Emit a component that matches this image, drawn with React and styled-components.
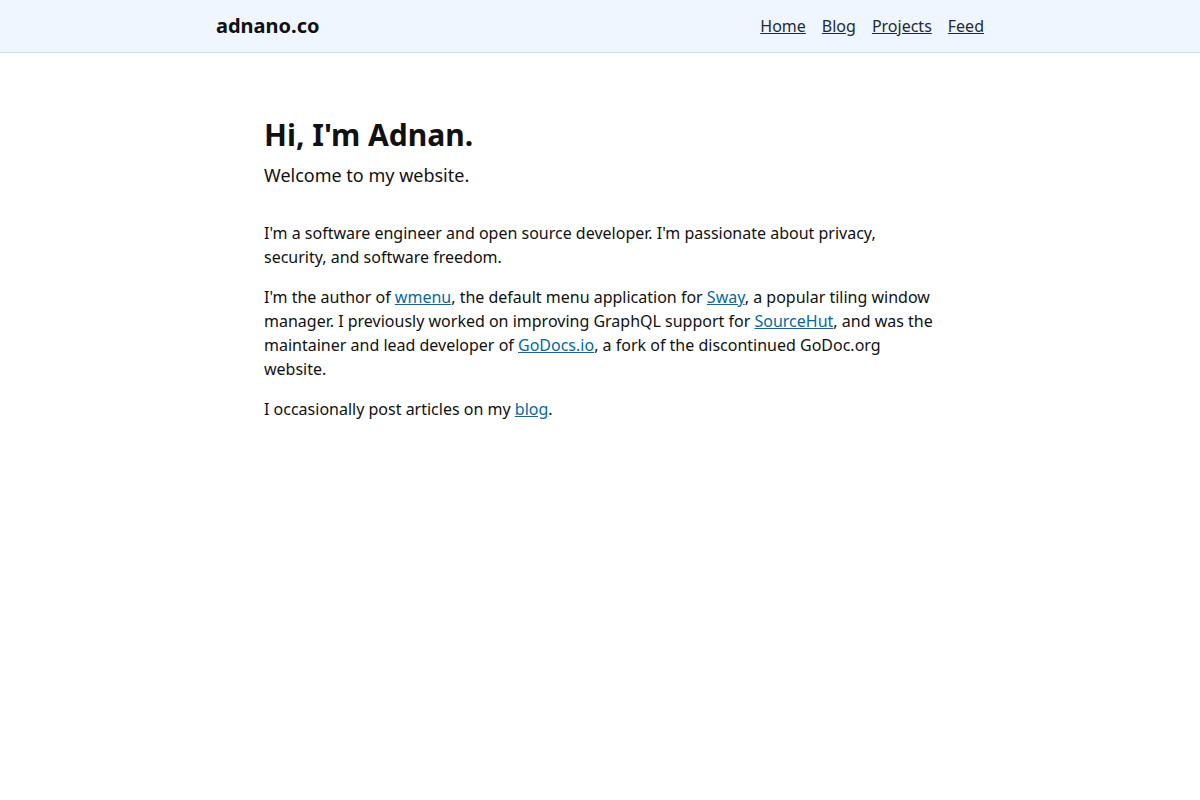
import React from 'react';
import styled, { createGlobalStyle } from 'styled-components';

const GlobalStyle = createGlobalStyle`
  html, body {
    margin: 0;
    padding: 0;
    background: #ffffff;
  }
  body {
    font-family: "Noto Sans", "DejaVu Sans", sans-serif;
    font-size: 16px;
    line-height: 24px;
    color: #111111;
  }
`;

const Header = styled.header`
  background-color: #eff6ff;
  border-bottom: 1px solid #bfdbfe;
`;

const HeaderInner = styled.div`
  max-width: 768px;
  margin: 0 auto;
  height: 52px;
  display: flex;
  align-items: center;
  justify-content: space-between;
`;

const Brand = styled.a`
  font-size: 20px;
  font-weight: 700;
  color: #111111;
  text-decoration: none;
`;

const Nav = styled.nav`
  display: flex;
  gap: 16px;
`;

const NavLink = styled.a`
  color: #1f2937;
  text-decoration: underline;
  font-size: 16px;
`;

const Main = styled.main`
  max-width: 672px;
  margin: 0 auto;
  padding-top: 62px;
`;

const Title = styled.h1`
  margin: 0;
  font-size: 30px;
  line-height: 40px;
  font-weight: 700;
`;

const Subtitle = styled.p`
  margin: 6px 0 32px;
  font-size: 18px;
  line-height: 28px;
`;

const Paragraph = styled.p`
  margin: 0 0 16px;
`;

const Link = styled.a`
  color: #0369a1;
  text-decoration: underline;
`;

export default function App() {
  return (
    <>
      <GlobalStyle />
      <Header>
        <HeaderInner>
          <Brand href="#">adnano.co</Brand>
          <Nav>
            <NavLink href="#">Home</NavLink>
            <NavLink href="#">Blog</NavLink>
            <NavLink href="#">Projects</NavLink>
            <NavLink href="#">Feed</NavLink>
          </Nav>
        </HeaderInner>
      </Header>
      <Main>
        <Title>Hi, I'm Adnan.</Title>
        <Subtitle>Welcome to my website.</Subtitle>
        <Paragraph>
          I'm a software engineer and open source developer. I'm passionate about
          privacy, security, and software freedom.
        </Paragraph>
        <Paragraph>
          I'm the author of <Link href="#">wmenu</Link>, the default menu application
          for <Link href="#">Sway</Link>, a popular tiling window manager. I previously
          worked on improving GraphQL support for <Link href="#">SourceHut</Link>, and
          was the maintainer and lead developer of <Link href="#">GoDocs.io</Link>, a
          fork of the discontinued GoDoc.org website.
        </Paragraph>
        <Paragraph>
          I occasionally post articles on my <Link href="#">blog</Link>.
        </Paragraph>
      </Main>
    </>
  );
}
